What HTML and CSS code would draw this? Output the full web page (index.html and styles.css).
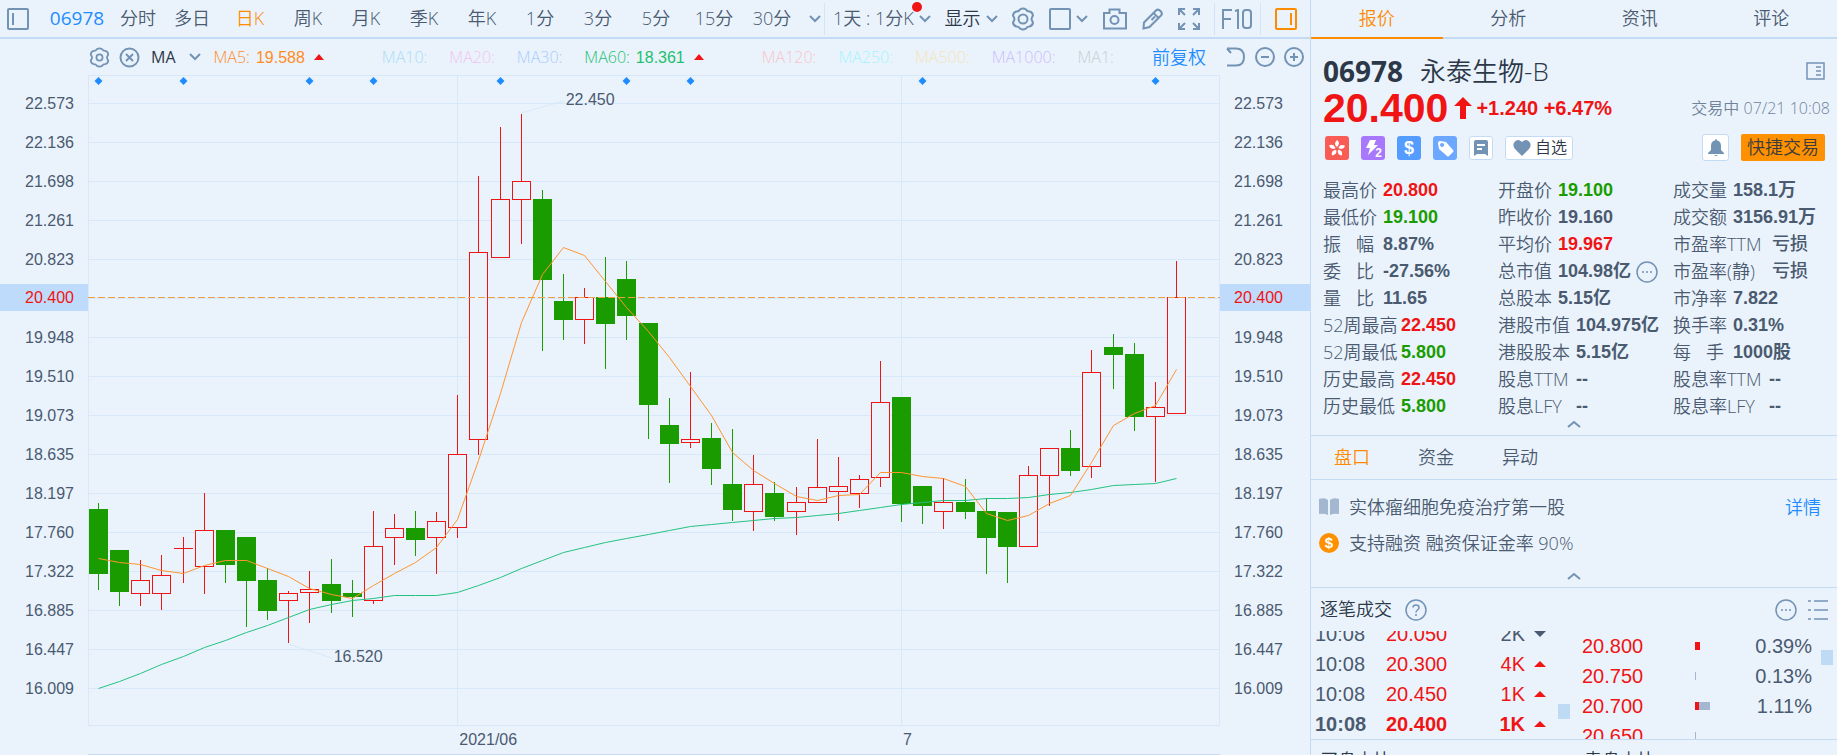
FILE: index.html
```html
<!DOCTYPE html>
<html lang="zh-CN">
<head>
    <meta charset="UTF-8">
    <title>06978 永泰生物-B</title>
    <link rel="stylesheet" href="styles.css">
</head>
<body>
<div id="main">
    <div class="toolbar">
        <button class="icon-btn side" aria-label="侧栏"><svg width="22" height="22"><rect x="1" y="1" width="20" height="20" rx="1"/><path d="M6 5v12"/></svg></button>
        <button class="code">06978</button>
        <button class="tab first">分时</button>
        <button class="tab">多日</button>
        <button class="tab active">日K</button>
        <button class="tab">周K</button>
        <button class="tab">月K</button>
        <button class="tab">季K</button>
        <button class="tab">年K</button>
        <button class="tab">1分</button>
        <button class="tab">3分</button>
        <button class="tab">5分</button>
        <button class="tab">15分</button>
        <button class="tab">30分</button>
        <button class="icon-btn arrow" aria-label="更多周期"><svg width="12" height="8"><path d="M1 1l5 5 5-5"/></svg></button>
        <div class="tools">
            <button class="drop period">1天 : 1分K<i class="dot"></i><svg width="12" height="8"><path d="M1 1l5 5 5-5"/></svg></button>
            <button class="drop show">显示<svg width="12" height="8"><path d="M1 1l5 5 5-5"/></svg></button>
            <button class="icon-btn" aria-label="设置"><svg width="24" height="24" viewBox="0 0 24 24"><path d="M9 2.500Q12 .500 15 2.500Q16 4.500 18.500 4.500Q21.500 5 22 8.500Q20.500 11 20.500 12Q20.500 13 22 15.500Q21.500 19 18.500 19.500Q16 19.500 15 21.500Q12 23.500 9 21.500Q8 19.500 5.500 19.500Q2.500 19 2 15.500Q3.500 13 3.500 12Q3.500 11 2 8.500Q2.500 5 5.500 4.500Q8 4.500 9 2.500Z"/><circle cx="12" cy="12" r="4.500"/></svg></button>
            <button class="drop box" aria-label="布局"><svg width="22" height="22"><rect x="1" y="1" width="20" height="20" rx="1"/></svg><svg width="12" height="8"><path d="M1 1l5 5 5-5"/></svg></button>
            <button class="icon-btn" aria-label="截图"><svg width="26" height="22"><path d="M2 5h5.500V1.500h10V5H24v15.500H2z"/><circle cx="12.500" cy="12" r="4"/></svg></button>
            <button class="icon-btn" aria-label="画线"><svg width="22" height="22"><path d="M1.500 20.500l.5-6L14 2.500q2-2 4.500.5t.5 4.500L7.500 19zM11.500 5l5 5M9.500 12l3.500-3.500"/></svg></button>
            <button class="icon-btn" aria-label="全屏"><svg width="22" height="22"><path d="M1 7V1h6M1 1l6 6M15 1h6v6M21 1l-6 6M1 15v6h6M1 21l6-6M21 15v6h-6M21 21l-6-6"/></svg></button>
            <button class="icon-btn f10" aria-label="F10"><svg width="31" height="20"><path d="M1 20V1h9M1 10h8M13 2l3-1v19M21 4q0-3 3-3h2q3 0 3 3v12q0 3-3 3h-2q-3 0-3-3z"/></svg></button>
            <button class="icon-btn on" aria-label="报价栏"><svg width="22" height="22"><rect x="1" y="1" width="20" height="20" rx="1"/><path d="M16 5v12"/></svg></button>
        </div>
    </div>
    <div class="ma-bar">
        <button class="icon-btn" aria-label="指标设置"><svg width="21" height="21" viewBox="0 0 24 24"><path d="M9 2.500Q12 .500 15 2.500Q16 4.500 18.500 4.500Q21.500 5 22 8.500Q20.500 11 20.500 12Q20.500 13 22 15.500Q21.500 19 18.500 19.500Q16 19.500 15 21.500Q12 23.500 9 21.500Q8 19.500 5.500 19.500Q2.500 19 2 15.500Q3.500 13 3.500 12Q3.500 11 2 8.500Q2.500 5 5.500 4.500Q8 4.500 9 2.500Z"/><circle cx="12" cy="12" r="3.500"/></svg></button>
        <button class="icon-btn" aria-label="关闭指标"><svg width="21" height="21"><circle cx="10.500" cy="10.500" r="9"/><path d="M7 7l7 7M14 7l-7 7"/></svg></button>
        <button class="ma-name">MA<svg width="12" height="8"><path d="M1 1l5 5 5-5"/></svg></button>
        <span class="ma ma5">MA5: <b>19.588</b><i class="up"></i></span>
        <span class="ma ma10">MA10:</span>
        <span class="ma ma20">MA20:</span>
        <span class="ma ma30">MA30:</span>
        <span class="ma ma60">MA60: <b>18.361</b><i class="up"></i></span>
        <span class="ma ma120">MA120:</span>
        <span class="ma ma250">MA250:</span>
        <span class="ma ma500">MA500:</span>
        <span class="ma ma1000">MA1000:</span>
        <span class="ma ma1">MA1:</span>
        <button class="fq">前复权</button>
        <button class="icon-btn" aria-label="撤销"><svg width="20" height="20"><path d="M1 1.500h9q8 0 8 8.500t-8 8.500H1M1 1.500L5 6"/></svg></button>
        <button class="icon-btn" aria-label="缩小"><svg width="20" height="20"><circle cx="10" cy="10" r="9"/><path d="M6 10h8"/></svg></button>
        <button class="icon-btn" aria-label="放大"><svg width="20" height="20"><circle cx="10" cy="10" r="9"/><path d="M6 10h8M10 6v8"/></svg></button>
    </div>
    <div class="chart">
        <div class="axis axis-left">
            <span>22.573</span><span>22.136</span><span>21.698</span><span>21.261</span><span>20.823</span><span class="now">20.400</span><span>19.948</span><span>19.510</span><span>19.073</span><span>18.635</span><span>18.197</span><span>17.760</span><span>17.322</span><span>16.885</span><span>16.447</span><span>16.009</span>
        </div>
        <div class="plot">
            <svg id="kline" viewBox="88 75 1132 651" preserveAspectRatio="none"></svg>
            <span class="mark high">22.450</span>
            <span class="mark low">16.520</span>
        </div>
        <div class="axis axis-right">
            <span>22.573</span><span>22.136</span><span>21.698</span><span>21.261</span><span>20.823</span><span class="now">20.400</span><span>19.948</span><span>19.510</span><span>19.073</span><span>18.635</span><span>18.197</span><span>17.760</span><span>17.322</span><span>16.885</span><span>16.447</span><span>16.009</span>
        </div>
    </div>
    <div class="time">
        <span class="mark june">2021/06</span>
        <span class="mark july">7</span>
    </div>
</div>

<div id="quote">
    <div class="nav">
        <button class="active">报价</button>
        <button>分析</button>
        <button>资讯</button>
        <button>评论</button>
    </div>
    <div class="head">
        <div class="name">
            <b>06978</b><span>永泰生物-B</span>
            <button class="icon-btn" aria-label="切换"><svg width="19" height="18"><rect x="1" y="1" width="17" height="16"/><path d="M10 5h5M10 9h5M10 13h5"/></svg></button>
        </div>
        <div class="price">
            <strong>20.400</strong>
            <svg width="18" height="22"><path d="M9 0l9 9h-6v13H6V9H0z"/></svg>
            <b>+1.240 +6.47%</b>
            <span>交易中 07/21 10:08</span>
        </div>
        <div class="badges">
            <i class="badge hk"><svg width="24" height="24" viewBox="0 0 24 24"><path d="M12 11Q8 8 12 4Q16 7 12 11"/><path d="M12 11Q8 8 12 4Q16 7 12 11" transform="rotate(72 12 12.500)"/><path d="M12 11Q8 8 12 4Q16 7 12 11" transform="rotate(144 12 12.500)"/><path d="M12 11Q8 8 12 4Q16 7 12 11" transform="rotate(216 12 12.500)"/><path d="M12 11Q8 8 12 4Q16 7 12 11" transform="rotate(288 12 12.500)"/></svg></i>
            <i class="badge l2"><svg width="24" height="24"><path d="M9 4h6l-2 5h4L7 19l2-7H5z"/></svg><em>2</em></i>
            <i class="badge usd">$</i>
            <i class="badge tag"><svg width="24" height="24"><path fill-rule="evenodd" d="M5 7q0-2 2-2l6 1 7 8q1 1 0 2l-4 4q-1 1-2 0l-8-7zM9 7a2 2 0 1 0 .1 0z"/></svg></i>
            <button class="badge note" aria-label="笔记"><svg width="14" height="16"><path fill-rule="evenodd" d="M2 0h10q2 0 2 2v14l-3-2H3l-3 2V2q0-2 2-2zM3 4v2h8V4zM3 8v2h5V8z"/></svg></button>
            <button class="fav"><svg width="18" height="16"><path d="M9 16L2 9Q-1 5 1.500 2Q5-2 9 2Q13-2 16.500 2Q19 5 16 9z"/></svg>自选</button>
            <button class="bell" aria-label="提醒"><svg width="16" height="17"><path d="M8 0q1 0 1 1.500Q13 2 13 7v4l3 3v1H0v-1l3-3V7q0-5 4-5.500Q7 0 8 0zM6 16h4q-2 2-4 0z"/></svg></button>
            <button class="trade">快捷交易</button>
        </div>
    </div>
    <div class="stats">
        <dl>
            <div><dt>最高价</dt><dd class="red">20.800</dd></div>
            <div><dt>最低价</dt><dd class="green">19.100</dd></div>
            <div><dt class="two">振 幅</dt><dd>8.87%</dd></div>
            <div><dt class="two">委 比</dt><dd>-27.56%</dd></div>
            <div><dt class="two">量 比</dt><dd>11.65</dd></div>
            <div><dt class="four">52周最高</dt><dd class="red">22.450</dd></div>
            <div><dt class="four">52周最低</dt><dd class="green">5.800</dd></div>
            <div><dt class="four">历史最高</dt><dd class="red">22.450</dd></div>
            <div><dt class="four">历史最低</dt><dd class="green">5.800</dd></div>
        </dl>
        <dl>
            <div><dt>开盘价</dt><dd class="green">19.100</dd></div>
            <div><dt>昨收价</dt><dd>19.160</dd></div>
            <div><dt>平均价</dt><dd class="red">19.967</dd></div>
            <div><dt>总市值</dt><dd>104.98亿</dd><svg class="more" width="22" height="22"><circle cx="11" cy="11" r="10"/><path d="M6 11h2M10 11h2M14 11h2"/></svg></div>
            <div><dt>总股本</dt><dd>5.15亿</dd></div>
            <div><dt class="four">港股市值</dt><dd>104.975亿</dd></div>
            <div><dt class="four">港股股本</dt><dd>5.15亿</dd></div>
            <div><dt class="four">股息TTM</dt><dd>--</dd></div>
            <div><dt class="four">股息LFY</dt><dd>--</dd></div>
        </dl>
        <dl>
            <div><dt>成交量</dt><dd>158.1万</dd></div>
            <div><dt>成交额</dt><dd>3156.91万</dd></div>
            <div><dt class="six">市盈率TTM</dt><dd class="word">亏损</dd></div>
            <div><dt class="six">市盈率(静)</dt><dd class="word">亏损</dd></div>
            <div><dt>市净率</dt><dd>7.822</dd></div>
            <div><dt>换手率</dt><dd>0.31%</dd></div>
            <div><dt class="two">每 手</dt><dd>1000股</dd></div>
            <div><dt class="six">股息率TTM</dt><dd>--</dd></div>
            <div><dt class="six">股息率LFY</dt><dd>--</dd></div>
        </dl>
    </div>
    <button class="fold" aria-label="收起"><svg width="14" height="8"><path d="M1 7l6-5 6 5"/></svg></button>
    <div class="sub-nav">
        <button class="active">盘口</button>
        <button>资金</button>
        <button>异动</button>
    </div>
    <div class="info">
        <p><svg width="20" height="18"><path class="book" d="M0 1q6-2 9 1v15q-4-2-9-1zM20 1q-6-2-9 1v15q4-2 9-1z"/></svg>实体瘤细胞免疫治疗第一股<a href="#">详情</a></p>
        <p><i class="coin">$</i>支持融资 融资保证金率 90%</p>
    </div>
    <button class="fold" aria-label="收起"><svg width="14" height="8"><path d="M1 7l6-5 6 5"/></svg></button>
    <div class="tick-head">
        <h3>逐笔成交</h3>
        <svg width="22" height="22"><circle cx="11" cy="11" r="10"/><path d="M8 8.500Q8 6 11 6t3 2.500Q14 10 12.500 11T11 13.500M11 15v2"/></svg>
        <span></span>
        <button class="icon-btn" aria-label="更多"><svg width="22" height="22"><circle cx="11" cy="11" r="10"/><path d="M6 11h2M10 11h2M14 11h2"/></svg></button>
        <button class="icon-btn" aria-label="列表"><svg width="20" height="22"><path d="M0 2h3M6 2h14M0 11h3M6 11h14M0 20h3M6 20h14"/></svg></button>
    </div>
    <div class="ticks">
        <div class="list list-left">
            <table>
                <tr><td class="t">10:08</td><td class="p">20.050</td><td class="v">2K</td><td><i class="down"></i></td></tr>
                <tr class="buy"><td class="t">10:08</td><td class="p">20.300</td><td class="v">4K</td><td><i class="up"></i></td></tr>
                <tr class="buy"><td class="t">10:08</td><td class="p">20.450</td><td class="v">1K</td><td><i class="up"></i></td></tr>
                <tr class="buy last"><td class="t">10:08</td><td class="p">20.400</td><td class="v">1K</td><td><i class="up"></i></td></tr>
            </table>
            <i class="thumb"></i>
        </div>
        <div class="list list-right">
            <table>
                <tr><td class="p">20.800</td><td class="bar"><i style="width:5px"></i></td><td class="v">0.39%</td></tr>
                <tr><td class="p">20.750</td><td class="bar"><b style="width:1px"></b></td><td class="v">0.13%</td></tr>
                <tr><td class="p">20.700</td><td class="bar"><i style="width:4px"></i><b style="width:11px"></b></td><td class="v">1.11%</td></tr>
                <tr><td class="p">20.650</td><td class="bar"><b style="width:1px"></b></td><td class="v"></td></tr>
            </table>
            <i class="thumb"></i>
        </div>
    </div>
    <div class="foot">
        <div class="foot-main"><span>买盘占比</span><span>卖盘占比</span></div>
        <div class="foot-end"></div>
    </div>
</div>

<script src="kline.js"></script>
</body>
</html>
```

FILE: kline.js
```js
// g跌 r涨: 类型, x, 最高, 实体上, 实体下, 最低
var candles = [
    ['g',98,503,509,574,590],['g',119,550,550,592,606],['r',140,560,580,593,606],['r',161,555,575,593,610],
    ['r',183,537,548,548,583],['r',204,493,530,566,594],['g',225,530,530,565,583],['g',246,537,537,581,627],
    ['g',267,568,580,611,620],['r',288,591,593,600,643],['r',309,571,589,592,623],['g',331,559,584,601,613],
    ['g',352,580,593,597,617],['r',373,511,546,600,604],['r',394,514,528,537,565],['g',415,511,528,540,556],
    ['r',436,512,521,537,574],['r',457,395,454,527,538],['r',478,176,252,439,455],['r',500,127,199,257,257],
    ['r',521,114,181,199,244],['g',542,190,199,280,351],['g',563,274,301,320,340],['r',584,288,297,319,344],
    ['g',605,257,297,324,369],['g',626,261,279,316,340],['g',648,323,323,405,439],['g',669,398,425,444,483],
    ['r',690,372,439,442,448],['g',711,423,438,469,485],['g',732,429,484,510,521],['r',753,455,484,511,531],
    ['g',774,482,493,517,521],['r',796,487,502,511,535],['r',817,439,487,502,502],['r',838,457,486,491,521],
    ['r',859,475,479,493,508],['r',880,361,402,477,487],['g',901,397,397,504,522],['g',922,486,486,506,524],
    ['r',943,478,502,511,529],['g',965,479,502,512,519],['g',986,498,511,538,574],['g',1007,512,512,547,583],
    ['r',1028,466,475,546,546],['r',1049,448,448,475,506],['g',1070,430,448,471,476],['r',1091,350,372,466,478],
    ['g',1113,334,347,355,389],['g',1134,343,354,417,431],['r',1155,382,407,416,482],['r',1176,261,297,413,413]
];
var ma5 = [558,562,564,570,573,565,560,560,568,576,588,594,598,585,573,562,547,519,460,393,322,274,247,255,281,307,331,357,386,415,452,470,483,496,500,495,494,472,472,476,478,486,513,520,515,503,495,462,425,413,405,369];
var ma60 = [688,681,673,664,656,647,640,632,625,617,609,604,600,598,595,595,595,592,585,577,568,560,552,547,542,538,534,530,526,524,522,520,518,517,515,513,510,507,504,502,500,500,498,498,497,494,492,489,485,484,483,478];
var events = [98,183,309,373,500,626,690,922,1155];

var svg = '';
function line(x1, y1, x2, y2, cls) {
    svg += '<path class="' + cls + '" d="M' + x1 + ' ' + y1 + 'L' + x2 + ' ' + y2 + '"/>';
}
// 网格
for (var y = 103; y <= 688; y += 39) {
    line(88, y + .5, 1220, y + .5, 'grid');
}
line(457.5, 75, 457.5, 726, 'grid');
line(901.5, 75, 901.5, 726, 'grid');
svg += '<rect class="grid" x="88.5" y="75.5" width="1131" height="650"/>';
line(521, 113, 564, 101, 'lead');
line(288, 644, 332, 658, 'lead');
// K线
for (var i = 0; i < candles.length; i++) {
    var c = candles[i], x = c[1];
    line(x + .5, c[2], x + .5, c[5], c[0]);
    if (c[0] == 'g') {
        svg += '<rect class="g body" x="' + (x - 9) + '" y="' + c[3] + '" width="19" height="' + (c[4] - c[3]) + '"/>';
    } else if (c[3] == c[4]) {
        line(x - 9, c[3] + .5, x + 10, c[3] + .5, 'r');
    } else {
        svg += '<rect class="r" x="' + (x - 8.5) + '" y="' + (c[3] + .5) + '" width="18" height="' + (c[4] - c[3]) + '"/>';
    }
}
line(88, 297.5, 1220, 297.5, 'now-line');
// 均线
function average(list, cls) {
    var pts = '';
    for (var i = 0; i < list.length; i++) {
        pts += (candles[i][1] + .5) + ',' + (list[i] + .5) + ' ';
    }
    svg += '<polyline class="' + cls + '" points="' + pts + '"/>';
}
average(ma60, 'line60');
average(ma5, 'line5');
for (var j = 0; j < events.length; j++) {
    svg += '<path class="event" d="M' + (events[j] + .5) + ' 77l4 4-4 4-4-4z"/>';
}
document.querySelector('#kline').innerHTML = svg;
```

FILE: styles.css
```css
*{
    padding: 0;
    margin: 0;
    box-sizing: border-box;
}
body{
    display: flex;
    height: 100vh;
    overflow: hidden;
    background-color: #eaf3fc;
    color: #4a5a70;
    font: 350 18px/27px "Open Sans","Noto Sans CJK SC",sans-serif;
}
button{
    border: none;
    background: none;
    color: inherit;
    font: inherit;
    white-space: nowrap;
    cursor: pointer;
}
i,em{
    font-style: normal;
}
svg{
    display: block;
    flex: none;
    fill: none;
    stroke: #7393b5;
    stroke-width: 2;
}
.icon-btn{
    flex: none;
}
.active{
    color: #ff8c00;
}
#main{
    flex: 1;
    min-width: 0;
    display: flex;
    flex-direction: column;
}
/*顶部工具栏*/
.toolbar{
    display: flex;
    align-items: center;
    height: 39px;
    padding: 0 13px 0 7px;
    border-bottom: 2px solid #c4dbf6;
}
.toolbar .code{
    width: 56px;
    margin-left: 20px;
    margin-right: 8px;
    font-size: 19px;
    font-weight: 400;
    color: #1e8cff;
}
.toolbar .tab{
    width: 58px;
}
.toolbar .first{
    width: 50px;
}
.toolbar .arrow{
    margin-left: 8px;
}
.tools{
    flex: 1;
    display: flex;
    align-items: center;
    justify-content: space-between;
    margin-left: 3px;
    padding-left: 8px;
    border-left: 1px solid #d2e4f8;
}
.drop{
    position: relative;
    display: flex;
    align-items: center;
    gap: 5px;
}
.drop .dot{
    position: absolute;
    right: 9px;
    top: -3px;
    width: 10px;
    height: 10px;
    border-radius: 50%;
    background-color: #f01414;
}
.show{
    color: #2c3848;
}
.tools .f10{
    padding: 6px 7px;
    border-left: 1px solid #d2e4f8;
    border-right: 1px solid #d2e4f8;
}
.on svg{
    stroke: #ff8c00;
}
/*均线*/
.ma-bar{
    display: flex;
    align-items: center;
    height: 36px;
    padding: 0 6px 0 89px;
    font-size: 16px;
}
.ma-bar .icon-btn + .icon-btn{
    margin-left: 9px;
}
.ma-name{
    display: flex;
    align-items: center;
    gap: 13px;
    margin: 0 13px 0 11px;
    color: #2c3848;
    font-weight: 400;
}
.ma{
    display: flex;
    align-items: center;
    margin-right: 22px;
    white-space: nowrap;
}
.ma b{
    margin: 0 9px 0 6px;
    font-family: "Liberation Sans",sans-serif;
    font-weight: 400;
}
.up,.down{
    display: inline-block;
    width: 0;
    border: 5px solid transparent;
    border-top: none;
    border-bottom: 6px solid #f01414;
}
.ma5{
    margin-right: 58px;
    color: #ff8c1e;
}
.ma10{
    color: #a8dcf8;
}
.ma20{
    color: #f0c4f0;
}
.ma30{
    color: #a8ccff;
}
.ma60{
    margin-right: 58px;
    color: #1ec070;
}
.ma120{
    color: #f8c4c8;
}
.ma250{
    color: #a4f4fc;
}
.ma500{
    color: #f4e4b8;
}
.ma1000{
    color: #ccbcfc;
}
.ma1{
    color: #c6ced2;
}
.fq{
    margin-left: auto;
    margin-right: 20px;
    font-size: 18px;
    color: #1e8cff;
}
/*K线图*/
.chart{
    flex: 1;
    display: flex;
    min-height: 0;
}
.axis{
    display: flex;
    flex-direction: column;
    width: 88px;
    padding: 9px 0 18px;
    font: 16px/27px "Liberation Sans",sans-serif;
}
.axis-right{
    width: 90px;
}
.axis span{
    flex: 1;
    display: flex;
    align-items: center;
    padding-left: 25px;
}
.axis-right span{
    padding-left: 14px;
}
.axis .now{
    flex: none;
    height: 27px;
    margin: 5px 0 7px;
    background-color: #bfdbfb;
    color: #f01414;
}
.plot{
    position: relative;
    flex: 1;
}
#kline{
    position: absolute;
    width: 100%;
    height: 100%;
    stroke-width: 1;
}
#kline .grid,#kline .lead{
    stroke: #d7e8fb;
}
#kline .g{
    stroke: #1a9c00;
}
#kline .body{
    fill: #1a9c00;
    stroke: none;
}
#kline .r{
    fill: #eaf3fc;
    stroke: #f01414;
}
#kline .now-line{
    stroke: #f0a040;
    stroke-dasharray: 7 3;
}
#kline .line5{
    stroke: #ff9430;
}
#kline .line60{
    stroke: #24c280;
}
#kline .event{
    fill: #1e8cff;
    stroke: none;
}
.mark{
    position: absolute;
    font: 16px/18px "Liberation Sans",sans-serif;
}
.high{
    left: 42.2%;
    top: 2.4%;
}
.low{
    left: 21.7%;
    top: 88%;
}
.time{
    position: relative;
    height: 29px;
    margin: 0 90px 0 88px;
    border-bottom: 1px solid #c4dbf6;
}
.time .mark{
    top: 5px;
}
.june{
    left: 32.8%;
}
.july{
    left: 72%;
}
/*右侧报价*/
#quote{
    display: flex;
    flex-direction: column;
    width: 527px;
    border-left: 1px solid #c4dbf6;
}
.nav{
    display: flex;
    height: 39px;
}
.nav button{
    flex: 1;
    border-bottom: 2px solid #c4dbf6;
}
.nav .active{
    border-color: #ff8c00;
}
.head{
    height: 135px;
    padding: 14px 12px 0;
}
.name{
    display: flex;
    align-items: center;
    height: 36px;
    color: #2c3848;
    font-size: 26px;
}
.name b{
    margin-right: 17px;
    font-size: 28px;
    font-weight: 700;
}
.name button{
    margin-left: auto;
}
.name svg{
    stroke-width: 1.500;
}
.price{
    display: flex;
    align-items: center;
    height: 38px;
    margin-right: -5px;
    color: #f01414;
    font-family: "Liberation Sans","Noto Sans CJK SC",sans-serif;
}
.price strong{
    font-size: 41px;
    font-weight: 700;
}
.price svg{
    margin: 0 4px 0 6px;
    fill: #f01414;
    stroke: none;
}
.price b{
    font-size: 20px;
    font-weight: 700;
}
.price span{
    margin-left: auto;
    color: #70829a;
    font: 350 16px/27px "Open Sans","Noto Sans CJK SC",sans-serif;
}
.badges{
    display: flex;
    align-items: center;
    gap: 12px;
    height: 27px;
    margin: 7px 0 0 2px;
}
.badge{
    position: relative;
    display: flex;
    align-items: center;
    justify-content: center;
    width: 24px;
    height: 24px;
    border-radius: 3px;
    color: white;
}
.badge svg,.fav svg,.bell svg{
    fill: white;
    stroke: none;
}
.hk{
    background-color: #f85c54;
}
.l2{
    background-color: #a878fc;
}
.l2 em{
    position: absolute;
    right: 3px;
    bottom: 0;
    font: bold 12px/14px "Liberation Sans",sans-serif;
}
.usd{
    background-color: #549cff;
    font: bold 18px/24px "Liberation Sans",sans-serif;
}
.tag{
    background-color: #6ca8ff;
}
.note,.fav,.bell{
    border: 1px solid #c4dbf6;
    border-radius: 3px;
    background-color: white;
}
.note svg,.fav svg,.bell svg{
    fill: #7393b5;
}
.fav{
    display: flex;
    align-items: center;
    gap: 4px;
    width: 68px;
    height: 24px;
    padding-left: 7px;
    color: #2c3848;
    font-size: 16px;
}
.bell{
    display: flex;
    align-items: center;
    justify-content: center;
    width: 27px;
    height: 27px;
    margin-left: auto;
}
.trade{
    width: 84px;
    height: 27px;
    border-radius: 2px;
    background-color: #ff9000;
    color: #3c3c3c;
}
.stats{
    display: grid;
    grid-template-columns: 1fr 1fr 1fr;
    height: 246px;
    padding: 3px 0 0 12px;
    margin-right: -11px;
}
.stats dl div{
    display: flex;
    align-items: center;
    height: 27px;
    white-space: nowrap;
}
.stats dt{
    width: 60px;
}
.stats .two{
    width: 51px;
    margin-right: 9px;
    text-align-last: justify;
}
.stats .four{
    width: 78px;
}
.stats .six{
    width: 96px;
}
.stats dd{
    font: bold 18px/27px "Liberation Sans","Noto Sans CJK SC",sans-serif;
}
.stats .word{
    padding-left: 3px;
    font-weight: 500;
}
.red{
    color: #f01414;
}
.green{
    color: #1a9c00;
}
.more{
    margin-left: 5px;
    stroke-width: 1.500;
}
.fold{
    display: flex;
    align-items: flex-start;
    justify-content: center;
    height: 16px;
    border-bottom: 1px solid #c4dbf6;
}
.sub-nav{
    display: flex;
    gap: 48px;
    height: 44px;
    padding-left: 23px;
    border-bottom: 1px solid #c4dbf6;
}
.info{
    height: 92px;
    padding: 9px 16px 0 8px;
}
.info p{
    display: flex;
    align-items: center;
    gap: 10px;
    height: 36px;
}
.info a{
    margin-left: auto;
    color: #1e8cff;
    text-decoration: none;
}
.book{
    fill: #a3b8d0;
    stroke: none;
}
.coin{
    width: 20px;
    height: 20px;
    border-radius: 50%;
    background-color: #ff9000;
    color: white;
    font: bold 15px/20px "Liberation Sans",sans-serif;
    text-align: center;
}
.tick-head{
    display: flex;
    align-items: center;
    height: 43px;
    padding: 0 9px 0 9px;
}
.tick-head h3{
    margin-right: 13px;
    font-size: 18px;
    font-weight: 350;
    color: #2c3848;
}
.tick-head span{
    flex: 1;
}
.tick-head svg{
    stroke-width: 1.500;
}
.tick-head button + button{
    margin-left: 11px;
}
.ticks{
    flex: 1;
    display: flex;
    min-height: 0;
    font: 20px/30px "Liberation Sans",sans-serif;
}
.list{
    position: relative;
    display: flex;
    overflow: hidden;
}
.list table{
    flex: 1;
    border-collapse: collapse;
    table-layout: fixed;
}
.list td{
    height: 30px;
}
.list-left{
    width: 263px;
    align-items: flex-end;
    padding: 0 24px 0 4px;
}
.list-right{
    flex: 1;
    align-items: flex-start;
    padding: 0 25px 0 8px;
}
.p{
    color: #f01414;
}
.list-left .t{
    width: 71px;
}
.list-left .v{
    width: 58px;
    text-align: right;
}
.list-left td:last-child{
    width: 25px;
    padding-left: 9px;
}
.buy .v{
    color: #f01414;
}
.last{
    font-weight: bold;
}
.list .up,.list .down{
    display: block;
    border-left-width: 6px;
    border-right-width: 6px;
}
.list .down{
    border-top: 6px solid #4a5a70;
    border-bottom: none;
}
.list-right .p{
    width: 113px;
}
.bar{
    width: 50px;
    font-size: 0;
}
.bar i,.bar b{
    display: inline-block;
    height: 8px;
    vertical-align: middle;
    background-color: #f01414;
}
.bar b{
    background-color: #a3b8d0;
}
.list-right .v{
    text-align: right;
}
.thumb{
    position: absolute;
    right: 4px;
    top: 73px;
    width: 12px;
    height: 15px;
    background-color: #bfdaf5;
}
.list-right .thumb{
    top: 19px;
}
.foot{
    display: flex;
    height: 16px;
    overflow: hidden;
}
.foot-main{
    flex: 4;
    display: flex;
    padding: 7px 0 0 9px;
    border-top: 1px solid #c4dbf6;
    color: #2c3848;
}
.foot-main span{
    flex: none;
    width: 264px;
}
.foot-end{
    flex: 1;
    margin-top: 6px;
    border-top: 1px solid #c4dbf6;
}
```
